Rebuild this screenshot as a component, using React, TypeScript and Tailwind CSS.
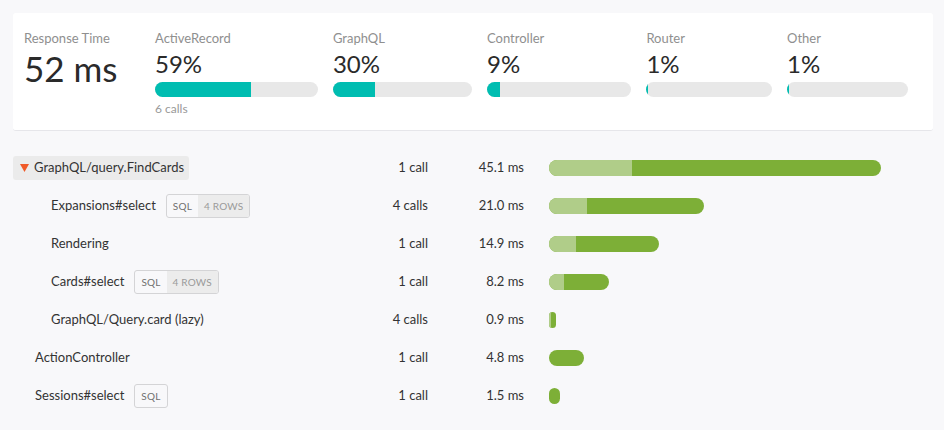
import React from 'react';

const FONT = { fontFamily: 'Lato, "Open Sans", Arial, sans-serif' };

const BREAKDOWN = [
  { name: 'ActiveRecord', pct: 59, calls: '6 calls' },
  { name: 'GraphQL', pct: 30 },
  { name: 'Controller', pct: 9 },
  { name: 'Router', pct: 1 },
  { name: 'Other', pct: 1 },
];

type Row = {
  name: string;
  level: 0 | 1;
  toggle?: boolean;
  sql?: boolean;
  rows?: string;
  calls: string;
  ms: number;
  self: number; // light portion, px
};

const ROWS: Row[] = [
  { name: 'GraphQL/query.FindCards', level: 0, toggle: true, calls: '1 call', ms: 45.1, self: 83 },
  { name: 'Expansions#select', level: 1, sql: true, rows: '4 ROWS', calls: '4 calls', ms: 21.0, self: 38 },
  { name: 'Rendering', level: 1, calls: '1 call', ms: 14.9, self: 27 },
  { name: 'Cards#select', level: 1, sql: true, rows: '4 ROWS', calls: '1 call', ms: 8.2, self: 15 },
  { name: 'GraphQL/Query.card (lazy)', level: 1, calls: '4 calls', ms: 0.9, self: 2 },
  { name: 'ActionController', level: 0, calls: '1 call', ms: 4.8, self: 0 },
  { name: 'Sessions#select', level: 0, sql: true, calls: '1 call', ms: 1.5, self: 0 },
];

const MAX_W = 332;

function SqlBadge({ rows }: { rows?: string }) {
  return (
    <span className="ml-[10px] inline-flex h-[24px] items-stretch overflow-hidden rounded-[3px] border border-[#d4d4d6] text-[10px] tracking-[0.2px]">
      <span className="flex items-center px-[6px] text-[#6f6f6f]">SQL</span>
      {rows && <span className="flex items-center bg-[#ececec] px-[6px] text-[#9a9a9a]">{rows}</span>}
    </span>
  );
}

export default function App() {
  return (
    <div className="min-h-screen bg-[#f8f8fa] pt-[13px] text-[#333]" style={FONT}>
      {/* summary card */}
      <div className="ml-[13px] flex h-[118px] w-[920px] rounded-[3px] border-b border-[#e6e6ea] bg-white pl-[11px] pr-[25px] pt-[17px]">
        <div className="w-[116px] flex-none">
          <div className="text-[13px] leading-[16px] text-[#8f8f8f]">Response Time</div>
          <div className="mt-[2px] text-[35px] leading-[40px] text-[#2a2a2a]">52 ms</div>
        </div>
        <div className="ml-[15px] flex flex-1 gap-[15px]">
          {BREAKDOWN.map((b) => (
            <div key={b.name} className="flex-auto">
              <div className="text-[13px] leading-[16px] text-[#8f8f8f]">{b.name}</div>
              <div className="mt-[4px] text-[24px] leading-[28px] text-[#2a2a2a]">{b.pct}%</div>
              <div className="mt-[4px] h-[15px] overflow-hidden rounded-full bg-[#e8e8e8]">
                <div className="h-full bg-[#00bdb1]" style={{ width: `${b.pct}%`, minWidth: 2 }} />
              </div>
              {b.calls && <div className="mt-[5px] text-[12px] leading-[14px] text-[#999]">{b.calls}</div>}
            </div>
          ))}
        </div>
      </div>

      {/* trace rows */}
      <div className="ml-[13px] mt-[18px] w-[920px]">
        {ROWS.map((r) => {
          const w = Math.max(6, Math.round((r.ms / 45.1) * MAX_W));
          return (
            <div key={r.name} className="grid h-[38px] grid-cols-[335px_80px_96px_1fr] items-center text-[13px]">
              <div className="flex items-center">
                {r.toggle ? (
                  <span className="flex h-[24px] items-center rounded-[3px] bg-[#ebebeb] pl-[7px] pr-[5px]">
                    <svg width="9" height="8" viewBox="0 0 9 8" className="mr-[5px]">
                      <path d="M0 0 H9 L4.5 8 Z" fill="#f05a28" />
                    </svg>
                    {r.name}
                  </span>
                ) : (
                  <span className={r.level === 1 ? 'pl-[38px]' : 'pl-[22px]'}>{r.name}</span>
                )}
                {r.sql && <SqlBadge rows={r.rows} />}
              </div>
              <div className="text-right">{r.calls}</div>
              <div className="text-right">{r.ms.toFixed(1)} ms</div>
              <div className="pl-[25px]">
                <div className="flex h-[16px] overflow-hidden rounded-full bg-[#7daf37]" style={{ width: w }}>
                  <div className="h-full bg-[#b0cd89]" style={{ width: r.self }} />
                </div>
              </div>
            </div>
          );
        })}
      </div>
    </div>
  );
}
